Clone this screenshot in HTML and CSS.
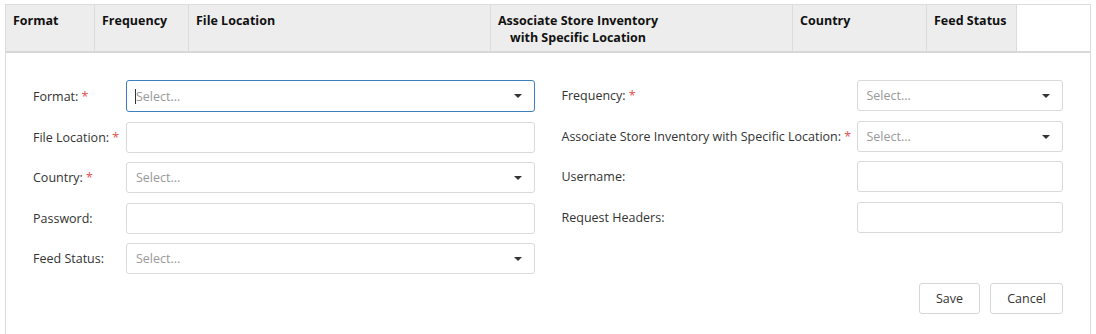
FILE: index.html
```html
<!DOCTYPE html>
<html lang="en">
<head>
<meta charset="UTF-8">
<title>Feeds</title>
<link rel="stylesheet" href="styles.css">
</head>
<body>
<div class="wrap">
    <div class="grid-head">
        <div class="th col-format">Format</div>
        <div class="th col-freq">Frequency</div>
        <div class="th col-file">File Location</div>
        <div class="th col-assoc"><span class="two-line">Associate Store Inventory<br>with Specific Location</span></div>
        <div class="th col-country">Country</div>
        <div class="th col-status">Feed Status</div>
        <div class="th col-empty"></div>
    </div>

    <div class="panel">
        <div class="form-cols">
            <!-- colonne gauche -->
            <div class="form-col left">
                <label>Format: <span class="req">*</span></label>
                <div class="select focused"><span class="caret-line"></span><span class="ph">Select...</span><span class="arrow"></span></div>

                <label>File Location: <span class="req">*</span></label>
                <div class="input"></div>

                <label>Country: <span class="req">*</span></label>
                <div class="select"><span class="ph">Select...</span><span class="arrow"></span></div>

                <label>Password:</label>
                <div class="input"></div>

                <label>Feed Status:</label>
                <div class="select"><span class="ph">Select...</span><span class="arrow"></span></div>
            </div>

            <!-- colonne droite -->
            <div class="form-col right">
                <label>Frequency: <span class="req">*</span></label>
                <div class="select"><span class="ph">Select...</span><span class="arrow"></span></div>

                <label>Associate Store Inventory with Specific Location: <span class="req">*</span></label>
                <div class="select"><span class="ph">Select...</span><span class="arrow"></span></div>

                <label>Username:</label>
                <div class="input"></div>

                <label>Request Headers:</label>
                <div class="input"></div>
            </div>
        </div>

        <div class="actions">
            <button class="btn btn-save">Save</button>
            <button class="btn btn-cancel">Cancel</button>
        </div>
    </div>
</div>
</body>
</html>
```

FILE: styles.css
```css
body {
    margin: 0;
    padding: 0;
    background-color: #fff;
    font-family: "Open Sans", "Noto Sans", sans-serif;
    font-size: 12.5px;
    color: #333;
}
.wrap {
    margin: 4px 5px 0 5px;
}

/* entete du tableau */
.grid-head {
    display: flex;
    border-top: 1px solid #dcdcdc;
    border-left: 1px solid #dcdcdc;
    border-right: 1px solid #dcdcdc;
    border-bottom: 2px solid #d8d8d8;
    height: 46px;
}
.th {
    box-sizing: border-box;
    height: 46px;
    padding: 7px 7px 0 7px;
    background-color: #ededed;
    border-right: 1px solid #dcdcdc;
    font-weight: bold;
    color: #111;
    line-height: 17px;
}
.col-format { width: 89px; }
.col-freq { width: 94px; }
.col-file { width: 302px; }
.col-assoc { width: 302px; }
.col-country { width: 134px; }
.col-status { width: 90px; }
.col-empty {
    flex: 1;
    background-color: #fff;
    border-right: none;
}
.two-line {
    display: inline-block;
    text-align: center;
}

/* formulaire */
.panel {
    border-left: 1px solid #dcdcdc;
    border-right: 1px solid #dcdcdc;
    padding: 27px 27px 40px 27px;
}
.form-cols {
    display: flex;
    gap: 27px;
}
.form-col {
    flex: 1;
    display: grid;
    row-gap: 9.5px;
    align-content: start;
    align-items: center;
}
.form-col.left {
    grid-template-columns: 93px 1fr;
}
.form-col.right {
    grid-template-columns: 295px 1fr;
}
label {
    color: #333;
    white-space: nowrap;
}
.req {
    color: #d9534f;
}
.input,
.select {
    box-sizing: border-box;
    height: 31px;
    border: 1px solid #dadada;
    border-radius: 3px;
    background-color: #fff;
    position: relative;
    display: flex;
    align-items: center;
    padding-left: 9px;
}
.select.focused {
    border-color: #3d7ebf;
    height: 32px;
}
.ph {
    color: #999;
}
.caret-line {
    display: inline-block;
    width: 1px;
    height: 15px;
    background-color: #333;
    margin-left: -1px;
}
.arrow {
    position: absolute;
    right: 12px;
    top: 13px;
    width: 0;
    height: 0;
    border-left: 4px solid transparent;
    border-right: 4px solid transparent;
    border-top: 4px solid #333;
}

.actions {
    display: flex;
    justify-content: flex-end;
    gap: 10px;
    margin-top: 9px;
}
.btn {
    height: 31px;
    border: 1px solid #d6d6d6;
    border-radius: 3px;
    background-color: #fff;
    font-family: "Open Sans", "Noto Sans", sans-serif;
    font-size: 12.5px;
    color: #333;
}
.btn-save { width: 61px; }
.btn-cancel { width: 73px; }
```
